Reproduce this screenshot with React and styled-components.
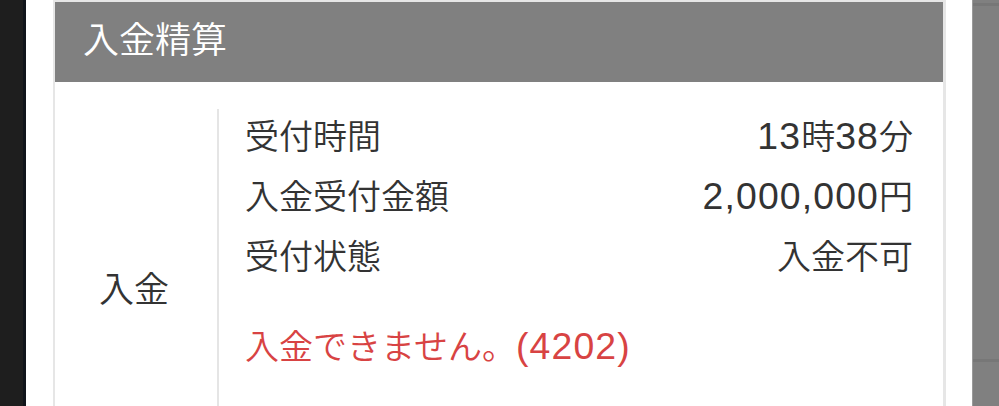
import React from 'react';
import styled, { createGlobalStyle } from 'styled-components';

const GlobalStyle = createGlobalStyle`
  html, body {
    margin: 0;
    padding: 0;
    background: #ffffff;
    font-family: "Noto Sans CJK JP", "Noto Sans", sans-serif;
    font-weight: 350;
    color: #333333;
  }
`;

const Page = styled.div`
  display: flex;
  height: 406px;
  overflow: hidden;
  background: #ffffff;
`;

const DarkEdge = styled.div`
  width: 23px;
  flex-shrink: 0;
  background: #1e1e1e;
  border-right: 3px solid #11151b;
`;

const Gutter = styled.div`
  width: ${(p) => p.$w}px;
  flex-shrink: 0;
`;

const Card = styled.section`
  width: 888px;
  flex-shrink: 0;
  border: solid #e6e6e6;
  border-width: 2px 3px 0 2px;
  background: #ffffff;
`;

const Header = styled.h2`
  margin: 0;
  height: 80px;
  padding-left: 28px;
  background: #808080;
  color: #ffffff;
  font-size: 36px;
  font-weight: 350;
  line-height: 70px;
`;

const Body = styled.div`
  display: grid;
  grid-template-columns: 162px 1fr;
  padding-top: 27px;
`;

const SideLabel = styled.div`
  display: flex;
  align-items: center;
  justify-content: center;
  padding: 0 4px 6px 0;
  font-size: 35px;
`;

const Details = styled.div`
  border-left: 2px solid #e5e5e5;
  padding: 0 30px 95px 26px;
`;

const Row = styled.div`
  display: flex;
  align-items: flex-start;
  justify-content: space-between;
  height: 60px;
  line-height: 52px;
  font-size: 34px;
`;

const ErrorText = styled.p`
  margin: 26px 0 0;
  line-height: 60px;
  font-size: 34px;
  color: #d84343;
`;

// Latin digits are set larger and wider, like the device font in the screenshot
const Latin = styled.span`
  font-family: "Liberation Sans", Arial, sans-serif;
  font-weight: 400;
  font-size: 1.1em;
  line-height: 1;
  letter-spacing: 0.03em;
`;

const NextCard = styled.div`
  flex: 1;
  background:
    linear-gradient(#777777, #777777) 0 3px / 100% 3px no-repeat,
    linear-gradient(#777777, #777777) 0 359px / 100% 3px no-repeat,
    #808080;
  border-left: 1px solid #9a9a9a;
`;

const mixed = (text) =>
  text.split(/([0-9,()]+)/).map((part, i) =>
    /[0-9,()]/.test(part) ? <Latin key={i}>{part}</Latin> : part
  );

const rows = [
  { label: '受付時間', value: '13時38分' },
  { label: '入金受付金額', value: '2,000,000円' },
  { label: '受付状態', value: '入金不可' },
];

export default function App() {
  return (
    <>
      <GlobalStyle />
      <Page>
        <DarkEdge />
        <Gutter $w={27} />
        <Card>
          <Header>入金精算</Header>
          <Body>
            <SideLabel>入金</SideLabel>
            <Details>
              {rows.map((r) => (
                <Row key={r.label}>
                  <span>{r.label}</span>
                  <span>{mixed(r.value)}</span>
                </Row>
              ))}
              <ErrorText>{mixed('入金できません。(4202)')}</ErrorText>
            </Details>
          </Body>
        </Card>
        <Gutter $w={26} />
        <NextCard />
      </Page>
    </>
  );
}
